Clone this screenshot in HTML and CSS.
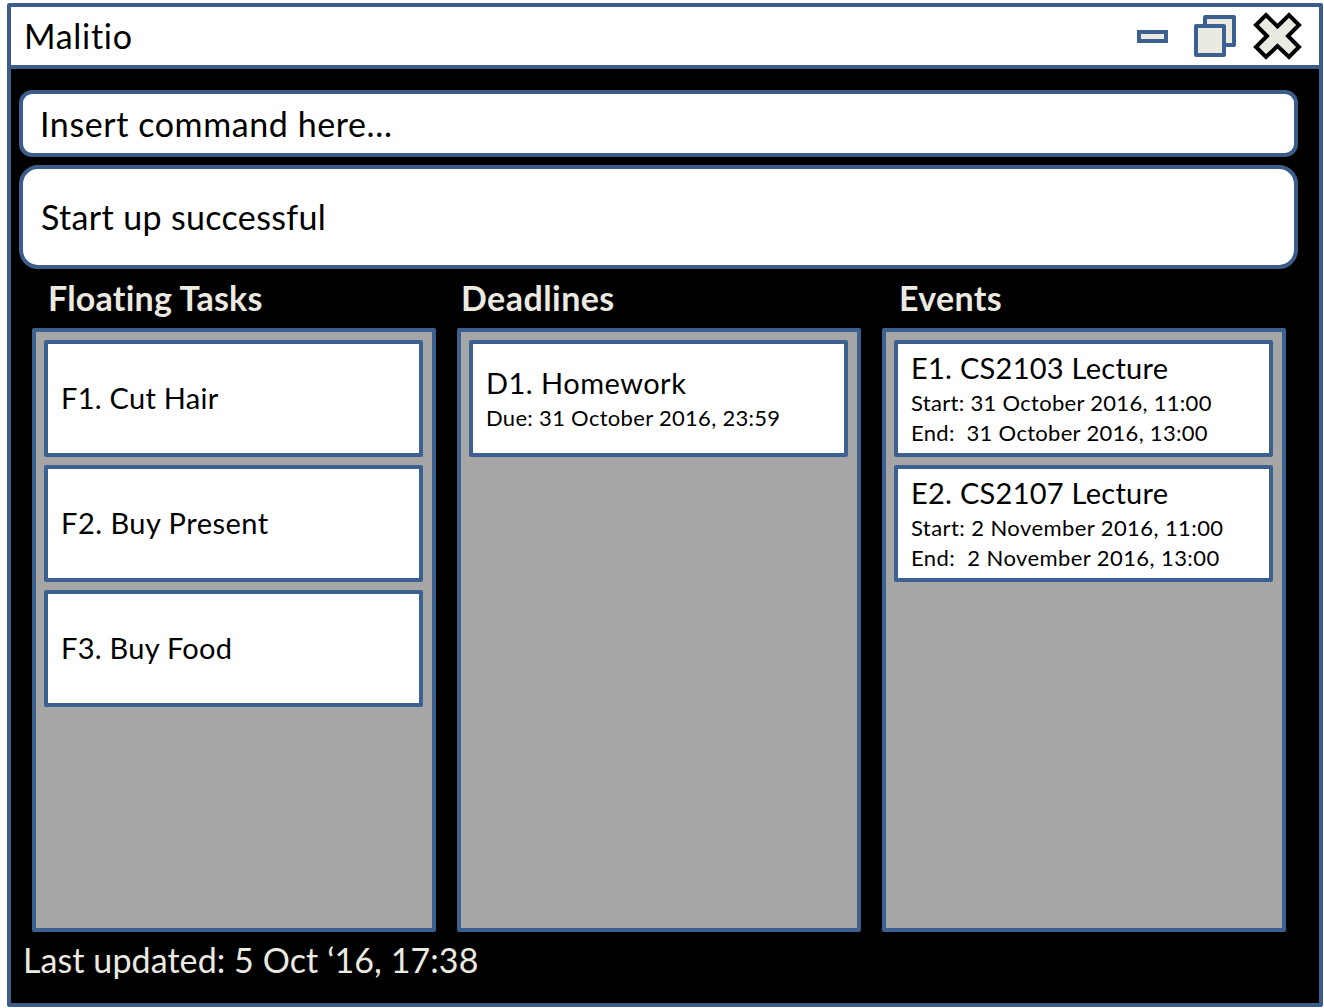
FILE: index.html
```html
<!DOCTYPE html>
<html lang="en">
<head>
<meta charset="utf-8">
<title>Malitio</title>
<link rel="stylesheet" href="styles.css">
</head>
<body>
<div class="window">
  <header class="titlebar">
    <h1 class="app-name">Malitio</h1>
    <svg class="controls" width="180" height="58" viewBox="1130 7 180 58" role="img" aria-label="Window controls">
      <rect class="glyph glyph-minimize" x="1139" y="32" width="27" height="9"/>
      <rect class="glyph" x="1205" y="17" width="29" height="28"/>
      <rect class="glyph" x="1196" y="26" width="28" height="29"/>
      <path class="glyph-close" d="M1266 15L1277.500 26.500L1289 15L1299 25L1288 36L1299 47L1289 57L1277.500 46L1266 57L1256 47L1267 36L1256 25Z"/>
    </svg>
  </header>
  <main class="content">
    <div class="command">Insert command here…</div>
    <div class="result">Start up successful</div>
    <div class="columns">
      <section class="column">
        <h2 class="heading heading-floating">Floating Tasks</h2>
        <div class="list">
          <div class="card"><p class="name">F1. Cut Hair</p></div>
          <div class="card"><p class="name name-wide">F2. Buy Present</p></div>
          <div class="card"><p class="name">F3. Buy Food</p></div>
        </div>
      </section>
      <section class="column">
        <h2 class="heading heading-deadlines">Deadlines</h2>
        <div class="list">
          <div class="card"><p class="name name-wide">D1. Homework</p><p class="date">Due: 31 October 2016, 23:59</p></div>
        </div>
      </section>
      <section class="column">
        <h2 class="heading heading-events">Events</h2>
        <div class="list">
          <div class="card"><p class="name">E1. CS2103 Lecture</p><p class="date">Start: 31 October 2016, 11:00</p><p class="date">End:&nbsp; 31 October 2016, 13:00</p></div>
          <div class="card"><p class="name">E2. CS2107 Lecture</p><p class="date date-wide">Start: 2 November 2016, 11:00</p><p class="date date-wide">End:&nbsp; 2 November 2016, 13:00</p></div>
        </div>
      </section>
    </div>
    <footer class="status">Last updated: 5 Oct ‘16, 17:38</footer>
  </main>
</div>
</body>
</html>
```
FILE: styles.css
```css
* { box-sizing: border-box; }
body { margin: 0; background: #fff; color: #000; font-family: Lato, sans-serif; font-variant-ligatures: none; }
h1, h2, p { margin: 0; font-weight: 400; }

.window { display: flex; flex-direction: column; width: 1316px; height: 1004px; margin: 3px 0 0 7px; border: 4px solid #3c5d8a; border-radius: 2px; background: #000; }

.titlebar { display: flex; justify-content: space-between; height: 62px; padding: 0 9px 0 13px; border-bottom: 4px solid #3c5d8a; background: #fff; }
.app-name { font-size: 34px; line-height: 57px; letter-spacing: 0.7px; }
.glyph { fill: #ebeae1; stroke: #3c6191; stroke-width: 4; stroke-linejoin: round; }
.glyph-minimize { stroke-linejoin: miter; }
.glyph-close { fill: #ebeae1; stroke: #000; stroke-width: 4; }

.content { display: flex; flex-direction: column; padding: 21px 21px 0 8px; font-size: 34px; white-space: nowrap; }
.command, .result { display: flex; align-items: center; border: 4px solid #3c5d8a; background: #fff; }
.command { height: 67px; padding: 0 0 1px 17px; border-radius: 13px; letter-spacing: 0.58px; }
.result { height: 104px; margin-top: 8px; padding: 0 0 1px 18px; border-radius: 19px; letter-spacing: 0.35px; }

.columns { display: grid; grid-template-columns: repeat(3, 404px); gap: 21px; padding-left: 13px; }
.heading { height: 59px; color: #ebeae1; font-weight: 700; font-size: 34px; line-height: 57px; }
.heading-floating { padding-left: 16px; letter-spacing: 0.22px; }
.heading-deadlines { padding-left: 4px; letter-spacing: 0.45px; }
.heading-events { padding-left: 17px; letter-spacing: 0.35px; }
.list { display: flex; flex-direction: column; gap: 8px; height: 604px; padding: 8px 9px 8px 8px; border: 4px solid #3c6191; border-radius: 2px; background: #a6a6a6; }
.card { display: flex; flex-direction: column; justify-content: center; height: 117px; padding: 0 0 3px 13px; border: 4px solid #3c6191; border-radius: 2px; background: #fff; }
.name { font-size: 29px; line-height: 37px; letter-spacing: 0.27px; }
.name-wide { letter-spacing: 0.48px; }
.date { padding-top: 2px; margin-bottom: -2px; font-size: 22px; line-height: 30px; letter-spacing: 0.3px; }
.date-wide { letter-spacing: 0.42px; }

.status { padding-left: 4px; color: #ebeae1; line-height: 55px; letter-spacing: 0.08px; }
```
